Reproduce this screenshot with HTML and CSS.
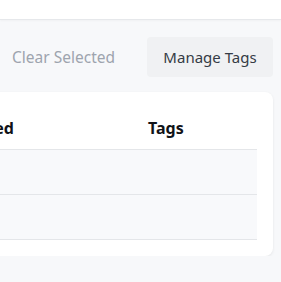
FILE: index.html
```html
<!DOCTYPE html>
<html>
<head>
<meta charset="utf-8">
<link rel="stylesheet" href="styles.css">
</head>
<body>
<div class="topbar"></div>
<div class="stage">
  <div class="page">
    <div class="toolbar">
      <button class="btn-link">Clear Selected</button>
      <button class="btn">Manage Tags</button>
    </div>
    <div class="card">
      <table class="table">
        <thead>
          <tr>
            <th class="col-name">Name</th>
            <th class="col-created">Created</th>
            <th class="col-tags">Tags</th>
          </tr>
        </thead>
        <tbody>
          <tr><td></td><td></td><td></td></tr>
          <tr><td></td><td></td><td></td></tr>
        </tbody>
      </table>
    </div>
  </div>
</div>
</body>
</html>
```

FILE: styles.css
```css
* { box-sizing: border-box; }
html, body {
  margin: 0;
  padding: 0;
  background: #f7f8fa;
  font-family: "Noto Sans", "Open Sans", sans-serif;
  overflow: hidden;
}
.topbar {
  height: 20px;
  background: #ffffff;
  border-bottom: 1px solid #e6e8eb;
  box-shadow: 0 1px 2px rgba(0,0,0,0.03);
}
.stage {
  display: flex;
  justify-content: flex-end;
  padding: 17px 8px 0 0;
}
.page {
  flex: 0 0 560px;
  width: 560px;
}
.toolbar {
  display: flex;
  justify-content: flex-end;
  align-items: center;
  margin-bottom: 15px;
}
.btn-link {
  font-family: inherit;
  font-size: 15.5px;
  color: #9ea4ae;
  background: none;
  border: none;
  padding: 0 16px;
  height: 40px;
  margin-right: 16px;
  cursor: pointer;
}
.btn {
  font-family: inherit;
  font-size: 15px;
  color: #353b45;
  background: #f0f1f3;
  border: none;
  border-radius: 4px;
  height: 40px;
  width: 126px;
  padding: 0;
  cursor: pointer;
}
.card {
  background: #ffffff;
  border-radius: 8px;
  box-shadow: 0 1px 3px rgba(0,0,0,0.08);
  padding: 16px;
}
.table {
  width: 100%;
  border-collapse: collapse;
  table-layout: fixed;
}
.table th {
  text-align: left;
  font-size: 16px;
  font-weight: 700;
  color: #111318;
  height: 41px;
  padding: 0 16px;
  border-bottom: 1px solid #e4e6e9;
  white-space: nowrap;
}
.col-name { width: 206px; }
.col-created { width: 197px; }
.col-tags { width: 125px; }
.table td {
  background: #f8f9fb;
  height: 45px;
  border-bottom: 1px solid #e4e6e9;
}
```
